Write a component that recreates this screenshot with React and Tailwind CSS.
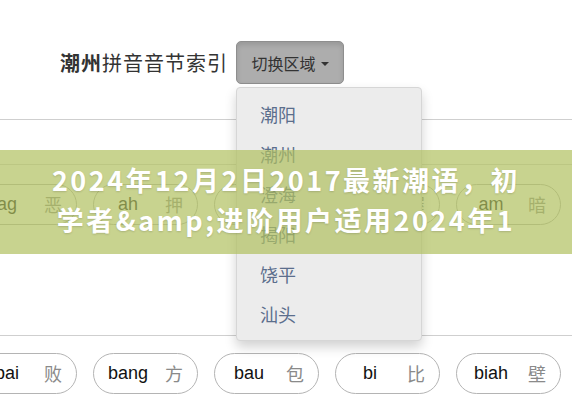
import React from 'react';

const rowA = [
  { py: 'ag', hz: '恶' },
  { py: 'ah', hz: '押' },
  { py: 'ai', hz: '哀' },
  { py: 'ak', hz: '握' },
  { py: 'am', hz: '暗' },
];

const rowB = [
  { py: 'bai', hz: '败' },
  { py: 'bang', hz: '方' },
  { py: 'bau', hz: '包' },
  { py: 'bi', hz: '比' },
  { py: 'biah', hz: '壁' },
];

const regions = ['潮阳', '潮州', '澄海', '揭阳', '饶平', '汕头'];

function Pill({ py, hz }) {
  return (
    <div className="flex items-center w-[105px] h-[41px] shrink-0 rounded-full border border-[#b4b4b4] bg-white">
      <span className="w-[68px] text-center text-[18px] text-[#111]" style={{ fontFamily: '"Liberation Sans", Arial, sans-serif' }}>
        {py}
      </span>
      <span className="w-[24px] text-center text-[18px] text-[#8a8a8a]">{hz}</span>
    </div>
  );
}

function PillRow({ items }) {
  return (
    <div className="flex gap-[16px] ml-[-28px]">
      {items.map((it) => (
        <Pill key={it.py} {...it} />
      ))}
    </div>
  );
}

export default function App() {
  return (
    <div
      className="relative w-[572px] h-[400px] overflow-hidden bg-white text-[#333]"
      style={{ fontFamily: '"Noto Sans CJK SC", "Noto Sans", sans-serif' }}
    >
      {/* 顶部标题 */}
      <div className="h-[120px] border-b border-[#cfcfcf] pt-[41px] pl-[60px]">
        <div className="flex items-center gap-[8px]">
          <h1 className="text-[20px] leading-none tracking-[1px] text-[#333]">
            <span className="font-bold">潮州</span>拼音音节索引
          </h1>
          <div className="relative">
            <button className="flex items-center gap-[5px] h-[43px] w-[108px] justify-center rounded-[5px] border border-[#8e8e8e] bg-[#adadad] shadow-[inset_0_3px_5px_rgba(0,0,0,0.12)] text-[16px] text-[#333]">
              切换区域
              <span className="mt-[2px] border-x-[4px] border-t-[4px] border-x-transparent border-t-[#333]" />
            </button>
            <div className="absolute left-0 top-full mt-[3px] w-[186px] z-10 rounded-[4px] border border-[#d6d6d6] bg-[#ececec] py-[6px] shadow-[0_6px_12px_rgba(0,0,0,0.18)]">
              {regions.map((r) => (
                <div key={r} className="h-[40px] flex items-center pl-[23px] text-[18px] text-[#5b6e8c]">
                  {r}
                </div>
              ))}
            </div>
          </div>
        </div>
      </div>

      {/* A 段 */}
      <div className="mt-[44px] border-t border-[#d6d6d6] pt-[19px] h-[171px]">
        <PillRow items={rowA} />
      </div>

      {/* B 段 */}
      <div className="border-t border-[#cfcfcf] pt-[17px]">
        <PillRow items={rowB} />
      </div>

      {/* 覆盖横幅 */}
      <div className="absolute left-0 right-0 top-[150px] h-[104px] z-20 bg-[rgba(176,192,96,0.7)] flex flex-col items-center justify-center pb-[5px]">
        <p className="text-[27px] leading-[40px] font-bold text-white tracking-[2.5px] whitespace-nowrap [text-shadow:0_1px_2px_rgba(0,0,0,0.15)]">
          2024年12月2日2017最新潮语，初
        </p>
        <p className="text-[27px] leading-[40px] font-bold text-white tracking-[2.5px] whitespace-nowrap [text-shadow:0_1px_2px_rgba(0,0,0,0.15)]">
          学者&amp;amp;进阶用户适用2024年1
        </p>
      </div>
    </div>
  );
}
